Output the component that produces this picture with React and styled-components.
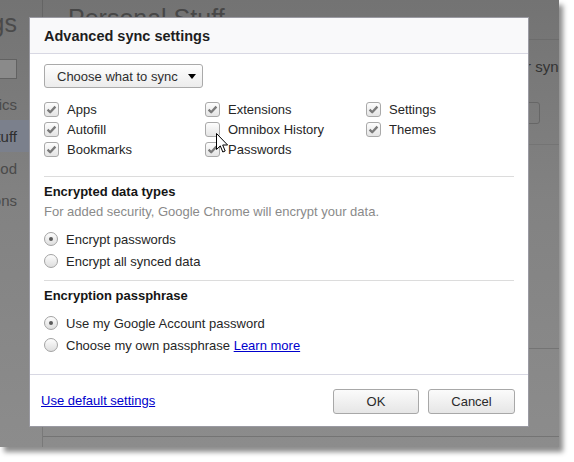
import React from "react";
import styled, { createGlobalStyle } from "styled-components";

const GlobalStyle = createGlobalStyle`
  html, body {
    margin: 0;
    padding: 0;
    background: #ffffff;
  }
  body {
    font-family: "Liberation Sans", Arial, sans-serif;
  }
`;

const Page = styled.div`
  width: 574px;
  height: 462px;
  overflow: hidden;
  background: #fff;
`;

const Frame = styled.div`
  position: relative;
  width: 559px;
  height: 447px;
  display: flex;
  overflow: hidden;
  background: linear-gradient(180deg, #737373 0%, #828282 45%, #8c8c8c 100%);
  box-shadow: 4px 5px 5px rgba(0, 0, 0, 0.45);
`;

/* dimmed settings page behind the dialog */
const Sidebar = styled.div`
  width: 42px;
  flex: none;
  display: flex;
  flex-direction: column;
  padding-top: 8px;
  border-right: 1px solid rgba(0, 0, 0, 0.13);
  overflow: hidden;
`;

const SideRow = styled.div`
  display: flex;
  justify-content: flex-end;
  align-items: center;
  white-space: nowrap;
  padding-right: 25px;
  height: ${(p) => p.$h || 32}px;
  font-size: ${(p) => p.$size || 15}px;
  color: ${(p) => (p.$active ? "#2e2e2e" : "#4a4a4a")};
  background: ${(p) => (p.$active ? "#7b808c" : "transparent")};
`;

const SearchRow = styled.div`
  display: flex;
  justify-content: flex-end;
  padding-right: 25px;
  margin: 21px 0 9px;
`;

const SearchBox = styled.div`
  flex: none;
  width: 150px;
  height: 18px;
  border: 1px solid #626262;
  background: #8a8a8a;
`;

const Main = styled.div`
  flex: 1;
  display: flex;
  flex-direction: column;
  overflow: hidden;
`;

const PageHeading = styled.div`
  height: 40px;
  box-sizing: border-box;
  padding: 3px 0 0 25px;
  font-size: 25px;
  line-height: 30px;
  color: #474747;
  border-bottom: 1px solid #6c6c6c;
`;

const BackText = styled.div`
  height: 52px;
  display: flex;
  justify-content: flex-end;
  align-items: center;
  margin-right: -7px;
  white-space: nowrap;
  font-size: 15px;
  color: #333;
`;

const BackButtonRow = styled.div`
  display: flex;
  justify-content: flex-end;
  padding: 10px 19px 0 0;
`;

const BackButton = styled.div`
  width: 200px;
  height: 20px;
  border: 1px solid #666;
  border-radius: 3px;
`;

const BackRule = styled.div`
  margin-top: ${(p) => p.$top}px;
  border-top: 1px solid #747474;
`;

/* dialog */
const Dialog = styled.div`
  position: absolute;
  left: 29px;
  top: 17px;
  width: 500px;
  height: 410px;
  box-sizing: border-box;
  display: flex;
  flex-direction: column;
  background: #fff;
  border: 1px solid #9a9aa2;
  color: #262626;
  font-size: 13px;
`;

const Header = styled.div`
  height: 36px;
  box-sizing: border-box;
  display: flex;
  align-items: center;
  padding-left: 14px;
  background: #f9f9fa;
  border-bottom: 1px solid #d8d8e3;
  font-size: 14.5px;
  font-weight: bold;
  color: #1e1e1e;
`;

const Body = styled.div`
  flex: 1;
  padding: 10px 14px 0;
`;

const Dropdown = styled.div`
  width: 159px;
  height: 24px;
  box-sizing: border-box;
  display: flex;
  align-items: center;
  justify-content: space-between;
  padding: 0 6px 0 12px;
  border: 1px solid #aaa;
  border-radius: 3px;
  background: linear-gradient(#fefefe, #ececec);
  color: #2e2e2e;
`;

const Arrow = styled.span`
  width: 0;
  height: 0;
  border-left: 4.5px solid transparent;
  border-right: 4.5px solid transparent;
  border-top: 5px solid #000;
  margin-top: 1px;
`;

const CheckGrid = styled.div`
  display: grid;
  grid-template-columns: repeat(3, 161px);
  grid-auto-rows: 20px;
  margin-top: 11px;
`;

const Option = styled.label`
  display: flex;
  align-items: center;
  gap: ${(p) => p.$gap || 8}px;
  height: ${(p) => p.$h || 20}px;
  white-space: nowrap;
`;

const Box = styled.span`
  width: 15px;
  height: 15px;
  box-sizing: border-box;
  flex: none;
  display: flex;
  align-items: center;
  justify-content: center;
  border: 1px solid #a9a9a9;
  border-radius: 3px;
  background: linear-gradient(#fdfdfd, #e4e4e4);
`;

const Radio = styled.span`
  width: 14px;
  height: 14px;
  box-sizing: border-box;
  flex: none;
  display: flex;
  align-items: center;
  justify-content: center;
  border: 1px solid #a3a3a3;
  border-radius: 50%;
  background: linear-gradient(#fdfdfd, #dedede);

  &::after {
    content: "";
    display: ${(p) => (p.$on ? "block" : "none")};
    width: 4px;
    height: 4px;
    border-radius: 50%;
    background: #5a5a5a;
  }
`;

const Rule = styled.div`
  margin-top: ${(p) => p.$top}px;
  border-top: 1px solid #dcdcdc;
`;

const SectionTitle = styled.div`
  margin-top: 5px;
  line-height: 20px;
  font-weight: bold;
  color: #151515;
`;

const Note = styled.div`
  line-height: 20px;
  color: #8a8a8a;
  margin-bottom: 6px;
`;

const RadioList = styled.div`
  margin-top: ${(p) => p.$top || 0}px;
`;

const Link = styled.a`
  color: #0000cc;
  text-decoration: underline;
  cursor: pointer;
`;

const Footer = styled.div`
  height: 52px;
  box-sizing: border-box;
  display: flex;
  align-items: center;
  padding: 0 13px 0 11px;
  border-top: 1px solid #d8d8e3;
`;

const Buttons = styled.div`
  margin-left: auto;
  display: flex;
  gap: 9px;
  margin-top: 2px;
`;

const Button = styled.button`
  width: ${(p) => p.$w}px;
  height: 25px;
  border: 1px solid #a8a8a8;
  border-radius: 3px;
  background: linear-gradient(#fbfbfb, #e6e6e6);
  font-family: "Liberation Sans", Arial, sans-serif;
  font-size: 13px;
  color: #2a2a2a;
  padding: 0;
`;

const Cursor = styled.svg`
  position: absolute;
  left: 216px;
  top: 133px;
  pointer-events: none;
`;

const Check = () => (
  <svg width="11" height="11" viewBox="0 0 11 11">
    <path
      d="M1.6 5.6 L4.2 8.2 L9.4 2.6"
      fill="none"
      stroke="#7a7a7a"
      strokeWidth="2.3"
      strokeLinejoin="round"
    />
  </svg>
);

const syncItems = [
  ["Apps", true],
  ["Extensions", true],
  ["Settings", true],
  ["Autofill", true],
  ["Omnibox History", false],
  ["Themes", true],
  ["Bookmarks", true],
  ["Passwords", true],
];

export default function App() {
  return (
    <Page>
      <GlobalStyle />
      <Frame>
        <Sidebar>
          <SideRow $h={30} $size={25}>
            Settings
          </SideRow>
          <SearchRow>
            <SearchBox />
          </SearchRow>
          <SideRow>Basics</SideRow>
          <SideRow $active>Personal Stuff</SideRow>
          <SideRow>Under the Hood</SideRow>
          <SideRow>Extensions</SideRow>
        </Sidebar>
        <Main>
          <PageHeading>Personal Stuff</PageHeading>
          <BackText>Manage your sync</BackText>
          <BackButtonRow>
            <BackButton />
          </BackButtonRow>
          <BackRule $top={20} />
          <BackRule $top={203} />
          <BackRule $top={87} />
        </Main>

        <Dialog>
          <Header>Advanced sync settings</Header>
          <Body>
            <Dropdown>
              <span>Choose what to sync</span>
              <Arrow />
            </Dropdown>
            <CheckGrid>
              {syncItems.map(([label, on]) => (
                <Option key={label}>
                  <Box>{on && <Check />}</Box>
                  {label}
                </Option>
              ))}
            </CheckGrid>

            <Rule $top={17} />
            <SectionTitle>Encrypted data types</SectionTitle>
            <Note>For added security, Google Chrome will encrypt your data.</Note>
            <RadioList>
              <Option $h={22}>
                <Radio $on />
                Encrypt passwords
              </Option>
              <Option $h={22}>
                <Radio />
                Encrypt all synced data
              </Option>
            </RadioList>

            <Rule $top={8} />
            <SectionTitle>Encryption passphrase</SectionTitle>
            <RadioList $top={6}>
              <Option $h={22}>
                <Radio $on />
                Use my Google Account password
              </Option>
              <Option $h={22}>
                <Radio />
                <span>
                  Choose my own passphrase <Link>Learn more</Link>
                </span>
              </Option>
            </RadioList>
          </Body>
          <Footer>
            <Link>Use default settings</Link>
            <Buttons>
              <Button $w={86}>OK</Button>
              <Button $w={87}>Cancel</Button>
            </Buttons>
          </Footer>
        </Dialog>

        <Cursor width="13" height="21" viewBox="0 0 13 21">
          <path
            d="M0.5 0.5 L0.5 16.5 L4.3 12.9 L6.8 19 L9.2 18 L6.7 12 L11.6 12 Z"
            fill="#fff"
            stroke="#000"
            strokeWidth="1"
            strokeLinejoin="miter"
          />
        </Cursor>
      </Frame>
    </Page>
  );
}
